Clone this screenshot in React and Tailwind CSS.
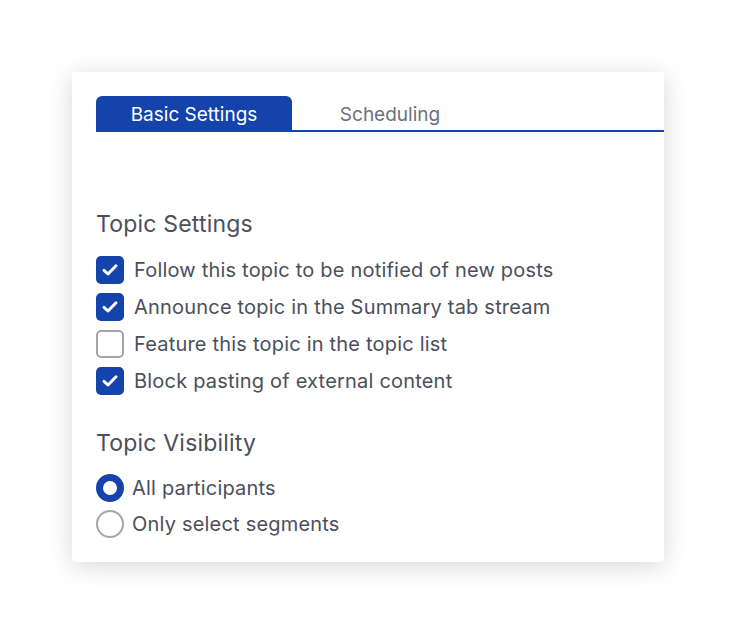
import React from "react";

const Check = ({ checked }) =>
  checked ? (
    <span className="flex h-[28px] w-[28px] items-center justify-center rounded-[5px] bg-[#1443ab]">
      <svg width="20" height="20" viewBox="0 0 20 20" fill="none">
        <path d="M4 10.3 L8 14 L16 5.8" stroke="white" strokeWidth="3" strokeLinecap="round" strokeLinejoin="round" />
      </svg>
    </span>
  ) : (
    <span className="box-border h-[28px] w-[28px] rounded-[5px] border-2 border-[#a3a6ad] bg-white" />
  );

const Radio = ({ checked }) =>
  checked ? (
    <span className="box-border h-[28px] w-[28px] rounded-full border-[7px] border-[#1443ab] bg-white" />
  ) : (
    <span className="box-border h-[28px] w-[28px] rounded-full border-2 border-[#a3a6ad] bg-white" />
  );

export default function App() {
  const checks = [
    ["Follow this topic to be notified of new posts", true],
    ["Announce topic in the Summary tab stream", true],
    ["Feature this topic in the topic list", false],
    ["Block pasting of external content", true],
  ];
  return (
    <div className="min-h-[635px] w-[736px] bg-white pt-[72px] pl-[72px]" style={{ fontFamily: "Inter, 'Noto Sans', sans-serif" }}>
      <div className="w-[592px] rounded-[4px] bg-white pl-[24px] pt-[24px] pb-[20px] shadow-[0_4px_24px_rgba(0,0,0,0.16)]">
        <div className="flex border-b-[2px] border-[#1443ab]">
          <div className="flex h-[34px] w-[196px] items-center justify-center rounded-t-[6px] bg-[#1443ab] pt-[5px] text-[19px] text-white">
            Basic Settings
          </div>
          <div className="flex h-[34px] w-[196px] items-center justify-center pt-[5px] text-[19px] text-[#6b7080]">
            Scheduling
          </div>
        </div>
        <div className="mt-[78px] text-[23px] leading-[28px] tracking-[0.2px] text-[#4a4f5c]">Topic Settings</div>
        <div className="mt-[13px] flex flex-col">
          {checks.map(([t, c]) => (
            <div key={t} className="flex h-[37px] items-center gap-[10px]">
              <Check checked={c} />
              <span className="text-[20px] tracking-[0.2px] text-[#4a4f5c]">{t}</span>
            </div>
          ))}
        </div>
        <div className="mt-[30px] text-[23px] leading-[28px] tracking-[0.2px] text-[#4a4f5c]">Topic Visibility</div>
        <div className="mt-[13px] flex flex-col">
          {[["All participants", true], ["Only select segments", false]].map(([t, c]) => (
            <div key={t} className="flex h-[36px] items-center gap-[8px]">
              <Radio checked={c} />
              <span className="text-[20px] tracking-[0.2px] text-[#4a4f5c]">{t}</span>
            </div>
          ))}
        </div>
      </div>
    </div>
  );
}
